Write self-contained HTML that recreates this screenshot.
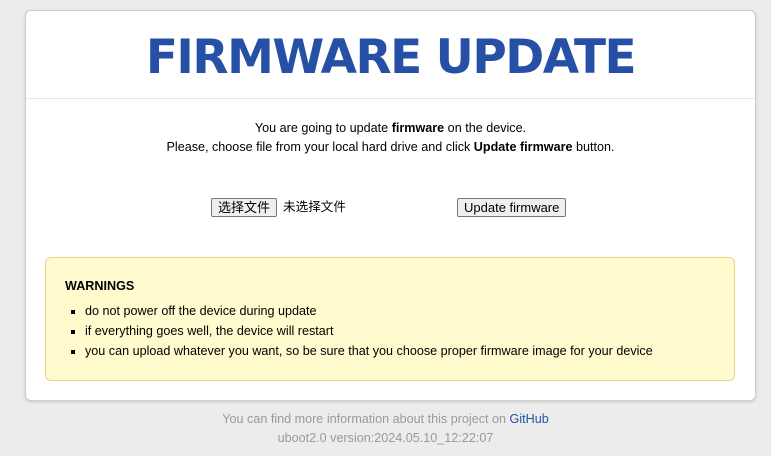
<!DOCTYPE html>
<html><head><meta charset="utf-8"><style>
html,body{margin:0;padding:0;}
body{width:771px;height:456px;background:#ececec;font-family:"Liberation Sans","Noto Sans CJK SC",sans-serif;font-size:12.6px;color:#000;position:relative;overflow:hidden;}
.card{position:absolute;left:25px;top:10px;width:729px;height:389px;background:#fff;border:1px solid #cfcfcf;border-radius:6px;box-shadow:0 1px 3px rgba(0,0,0,.15);}
.hdr{height:87px;border-bottom:1px solid #e6e6e6;text-align:center;overflow:hidden;}
h1{margin:0;font-family:"DejaVu Sans",sans-serif;font-weight:bold;font-size:47px;color:#2650a5;line-height:93px;letter-spacing:-1.5px;}
.t{position:absolute;left:0;width:729px;text-align:center;line-height:16px;}
.btn{position:absolute;top:187px;height:19px;border:1px solid #767676;background:#efefef;border-radius:2px;font-size:13px;line-height:17px;padding:0 6px;box-sizing:border-box;}
.warn{position:absolute;left:19px;top:246px;width:688px;height:122px;background:#fffbcf;border:1px solid #e8d488;border-radius:6px;}
.warn b{position:absolute;left:19px;top:21px;}
.warn ul{position:absolute;left:0;top:43px;margin:0;padding:0 0 0 39px;list-style:square;}
.warn li{line-height:20px;}
.foot{position:absolute;left:0;width:771px;text-align:center;color:#9a9a9a;font-size:12.6px;}
.foot a{color:#2650a5;text-decoration:none;}
</style></head><body>
<div class="card">
<div class="hdr"><h1>FIRMWARE UPDATE</h1></div>
<div class="t" style="top:109px">You are going to update <b>firmware</b> on the device.</div>
<div class="t" style="top:128px">Please, choose file from your local hard drive and click <b>Update firmware</b> button.</div>
<div class="btn" style="left:185px;">选择文件</div>
<div style="position:absolute;left:257px;top:188px;line-height:17px;">未选择文件</div>
<div class="btn" style="left:431px;">Update firmware</div>
<div class="warn"><b>WARNINGS</b><ul>
<li>do not power off the device during update</li>
<li>if everything goes well, the device will restart</li>
<li>you can upload whatever you want, so be sure that you choose proper firmware image for your device</li>
</ul></div>
</div>
<div class="foot" style="top:412px">You can find more information about this project on <a>GitHub</a></div>
<div class="foot" style="top:431px">uboot2.0 version:2024.05.10_12:22:07</div>
</body></html>
